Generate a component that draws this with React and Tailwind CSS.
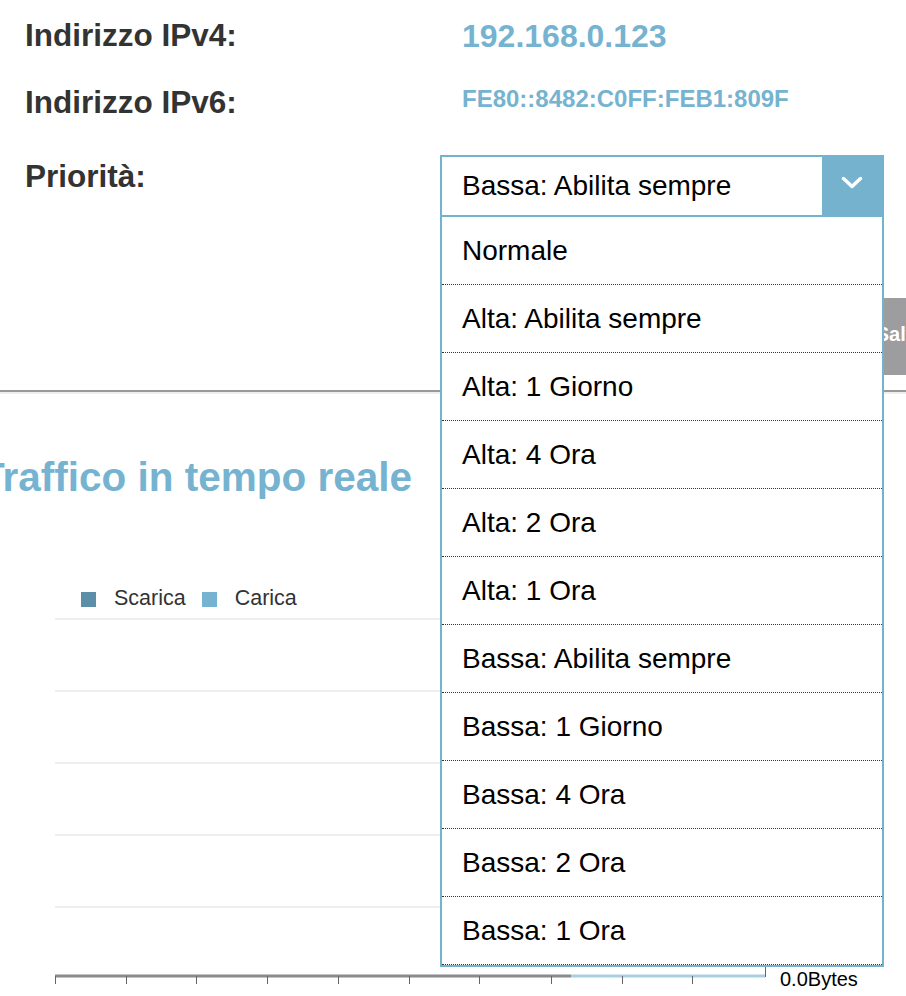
import { useState } from 'react';

const OPTIONS = [
    'Normale',
    'Alta: Abilita sempre',
    'Alta: 1 Giorno',
    'Alta: 4 Ora',
    'Alta: 2 Ora',
    'Alta: 1 Ora',
    'Bassa: Abilita sempre',
    'Bassa: 1 Giorno',
    'Bassa: 4 Ora',
    'Bassa: 2 Ora',
    'Bassa: 1 Ora',
];

const TICKS = [0, 71, 141, 212, 283, 354, 424, 496, 567, 637];

const PrioritySelect = () => {
    const [value] = useState('Bassa: Abilita sempre');

    return (
        <div className="relative w-[444px]">
            <div className="flex h-[62px] border-2 border-[#74b2ce]">
                <div className="flex flex-1 items-center pl-[20px] text-[28px] leading-none text-black">{value}</div>
                <div className="flex w-[60px] items-center justify-center bg-[#74b2ce] pb-[7px]">
                    <svg width="22" height="13" viewBox="0 0 22 13">
                        <polyline points="2.5,2.5 11,10.5 19.5,2.5" fill="none" stroke="white" strokeWidth="3.5" strokeLinecap="round" strokeLinejoin="round" />
                    </svg>
                </div>
            </div>

            {/* lista aperta */}
            <ul className="absolute left-0 top-full z-10 w-full border-x-2 border-b-2 border-[#74b2ce] bg-white">
                {OPTIONS.map((opt) => (
                    <li key={opt} className="flex h-[68px] items-center border-b border-dotted border-[#333] pl-[20px] text-[28px] leading-none text-black">
                        {opt}
                    </li>
                ))}
            </ul>
        </div>
    );
};

export default function App() {
    return (
        <div className="relative h-[996px] w-[906px] overflow-hidden bg-white font-['Liberation_Sans',Arial,sans-serif]">
            <div className="flex h-[72px] items-center">
                <div className="w-[440px] pl-[25px] text-[31.5px] font-bold leading-none text-[#333]">Indirizzo IPv4:</div>
                <div className="pl-[22px] text-[32px] font-bold leading-none text-[#75b3d0]">192.168.0.123</div>
            </div>
            <div className="flex h-[62px] items-center">
                <div className="w-[440px] pl-[25px] text-[31.5px] font-bold leading-none text-[#333]">Indirizzo IPv6:</div>
                <div className="mb-[8px] pl-[22px] text-[24px] font-bold leading-none text-[#75b3d0]">FE80::8482:C0FF:FEB1:809F</div>
            </div>
            <div className="flex items-start">
                <div className="w-[440px] pl-[25px] pt-[27px] text-[31.5px] font-bold leading-none text-[#333]">Priorità:</div>
                <div className="pt-[21px]">
                    <PrioritySelect />
                </div>
            </div>

            <div className="mt-[81px] flex h-[77px] justify-end">
                <button className="-mr-[52px] bg-[#9d9c9f] px-[30px] pb-[6px] text-[20px] font-bold leading-none text-white">Salva</button>
            </div>
            <div className="mt-[15px] border-t-2 border-b-2 border-t-[#999] border-b-[#eee]" />

            <h2 className="-ml-[20px] mt-[63px] text-[40.5px] font-bold leading-none text-[#75b3d0]">Traffico in tempo reale</h2>

            <div className="ml-[81px] mt-[91px] flex h-[21px] items-center text-[21.5px] leading-none text-[#333]">
                <span className="h-[15px] w-[15px] bg-[#5d8ea7]" />
                <span className="ml-[18px]">Scarica</span>
                <span className="ml-[16px] h-[15px] w-[15px] bg-[#75b3d0]" />
                <span className="ml-[18px]">Carica</span>
            </div>

            <div className="ml-[55px] mt-[8px] w-[710px]">
                <div className="h-[72px] border-t-2 border-[#eee]" />
                <div className="h-[72px] border-t-2 border-[#eee]" />
                <div className="h-[72px] border-t-2 border-[#eee]" />
                <div className="h-[72px] border-t-2 border-[#eee]" />
                <div className="h-[57px] border-t-2 border-[#eee]" />
            </div>

            <div className="ml-[55px] flex items-center">
                <svg width="712" height="20" viewBox="0 0 712 20">
                    <line x1="0" y1="10" x2="516" y2="10" stroke="#8a8a8a" strokeWidth="3" />
                    <line x1="516" y1="10" x2="710" y2="10" stroke="#a9cfe1" strokeWidth="3" />
                    {TICKS.map((t) => (
                        <line key={t} x1={t + 0.5} y1="10" x2={t + 0.5} y2="18" stroke="#666" strokeWidth="1" />
                    ))}
                    <line x1="710.5" y1="0" x2="710.5" y2="11" stroke="#666" strokeWidth="1" />
                </svg>
                <span className="ml-[13px] mt-[6px] text-[20px] leading-none text-black">0.0Bytes</span>
            </div>
        </div>
    );
}
